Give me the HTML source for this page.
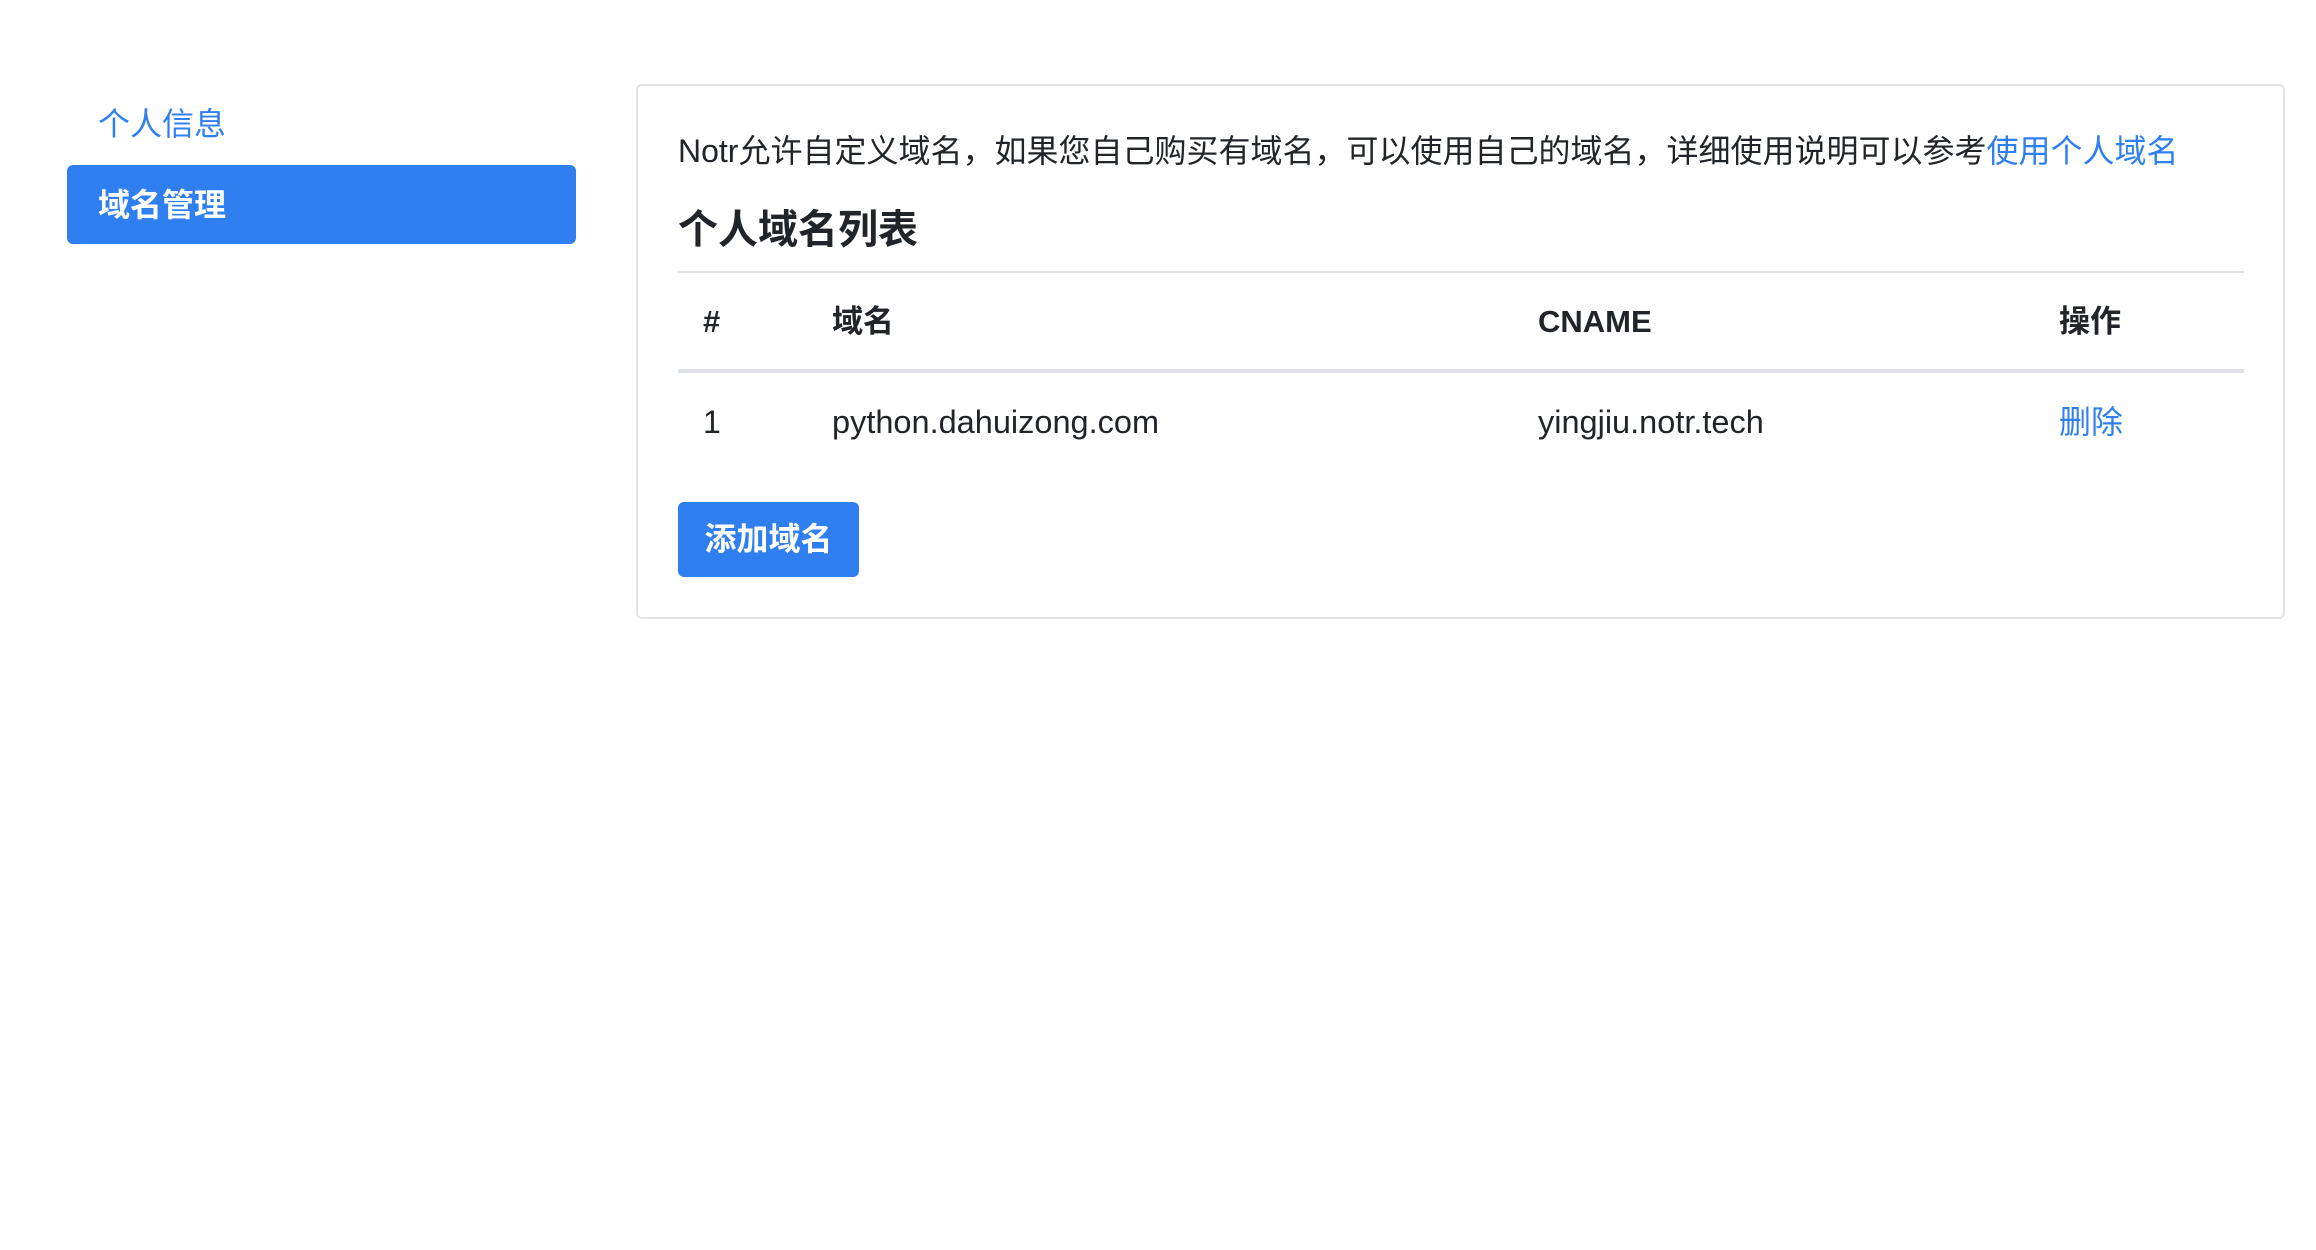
<!DOCTYPE html>
<html><head><meta charset="utf-8"><style>
body{margin:0;width:2316px;height:1250px;background:#fff;font-family:"Liberation Sans","Noto Sans CJK SC",sans-serif;color:#212529;position:relative;overflow:hidden}
.a{position:absolute;white-space:nowrap}
.blue{color:#2f7ff0}
</style></head><body>
<div class="a blue" style="left:98px;top:104px;font-size:32px;line-height:40px">个人信息</div>
<div class="a" style="left:67px;top:165px;width:509px;height:79px;background:#2f7ff0;border-radius:6px"></div>
<div class="a" style="left:98px;top:185px;font-size:32px;line-height:40px;color:#fff;font-weight:bold">域名管理</div>
<div class="a" style="left:636px;top:84px;width:1645px;height:531px;border:2px solid #e3e3e3;border-radius:6px"></div>
<div class="a" style="left:678px;top:130px;font-size:32px;line-height:42px">Notr允许自定义域名，如果您自己购买有域名，可以使用自己的域名，详细使用说明可以参考<span class="blue">使用个人域名</span></div>
<div class="a" style="left:678px;top:204px;font-size:40px;line-height:52px;font-weight:bold">个人域名列表</div>
<div class="a" style="left:678px;top:271px;width:1566px;height:2px;background:#e3e3e3"></div>
<div class="a" style="left:678px;top:369px;width:1566px;height:4px;background:#dee2e6"></div>
<div class="a" style="top:302px;left:703px;font-size:31px;line-height:40px;font-weight:bold">#</div>
<div class="a" style="top:302px;left:832px;font-size:31px;line-height:40px;font-weight:bold">域名</div>
<div class="a" style="top:302px;left:1538px;font-size:31px;line-height:40px;font-weight:bold">CNAME</div>
<div class="a" style="top:302px;left:2059px;font-size:31px;line-height:40px;font-weight:bold">操作</div>
<div class="a" style="top:402px;left:703px;font-size:32px;line-height:40px">1</div>
<div class="a" style="top:402px;left:832px;font-size:32.5px;line-height:40px">python.dahuizong.com</div>
<div class="a" style="top:402px;left:1538px;font-size:32.5px;line-height:40px">yingjiu.notr.tech</div>
<div class="a blue" style="top:402px;left:2059px;font-size:32px;line-height:40px">删除</div>
<div class="a" style="left:678px;top:502px;width:181px;height:75px;background:#2f7ff0;border-radius:6px;color:#fff;font-size:32px;line-height:75px;text-align:center;font-weight:bold">添加域名</div>
</body></html>
